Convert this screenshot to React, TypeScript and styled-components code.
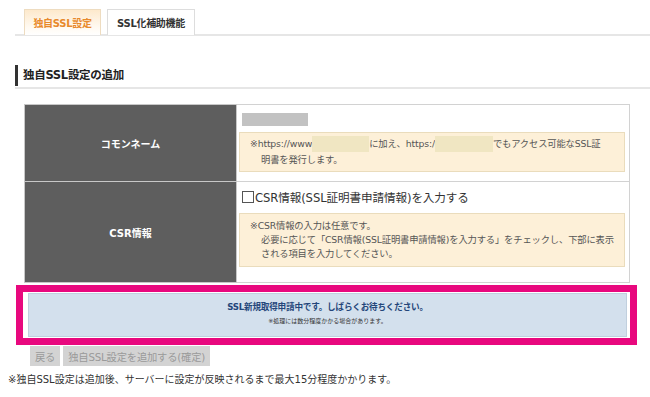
import React from 'react';
import styled, { createGlobalStyle } from 'styled-components';

const GlobalStyle = createGlobalStyle`
  html, body {
    margin: 0;
    padding: 0;
    background: #fff;
  }
  body {
    font-family: 'DejaVu Sans', 'Noto Sans CJK JP', sans-serif;
    color: #333;
  }
`;

const Page = styled.div`
  width: 650px;
  height: 397px;
  overflow: hidden;
  padding-left: 8px;
  box-sizing: border-box;
`;

const TabBar = styled.div`
  margin: 9px 0 0 7px;
  padding-left: 9px;
  height: 25px;
  display: flex;
  gap: 6px;
  border-bottom: 2px solid #e6e6e6;
`;

const Tab = styled.div<{ active?: boolean }>`
  width: ${(p) => (p.active ? '77px' : '88px')};
  box-sizing: border-box;
  height: 26px;
  display: flex;
  align-items: center;
  justify-content: center;
  font-size: 10px;
  font-weight: bold;
  letter-spacing: -0.3px;
  color: ${(p) => (p.active ? '#e8892b' : '#333')};
  border: 1px solid ${(p) => (p.active ? '#eedcc0' : '#dddddd')};
  border-bottom: none;
  background: ${(p) =>
    p.active ? 'linear-gradient(#fde9cc, #fffaf2 70%, #fff)' : '#fff'};
`;

const Heading = styled.div`
  margin: 29px 0 0 7px;
  padding-bottom: 1px;
  border-bottom: 2px solid #e6e6e6;
`;

const HeadingText = styled.h2`
  margin: 0;
  height: 21px;
  line-height: 21px;
  padding-left: 5px;
  border-left: 3px solid #333;
  font-size: 11.5px;
  font-weight: bold;
  letter-spacing: -0.3px;
  color: #222;
`;

const Table = styled.table`
  margin: 15px 0 0 16px;
  width: 606px;
  border-collapse: collapse;
  table-layout: fixed;
`;

const LabelCell = styled.th<{ h: number }>`
  width: 211px;
  height: ${(p) => p.h}px;
  padding: 0;
  background: #5e5e5e;
  color: #fff;
  font-size: 10px;
  font-weight: bold;
  text-align: center;
  border: 1px solid #c8c8c8;
`;

const ValueCell = styled.td`
  vertical-align: top;
  padding: 8px 4px 0 2px;
  border: 1px solid #d2d2d2;
`;

const Placeholder = styled.div`
  margin-left: 3px;
  width: 66px;
  height: 13px;
  background: #c2c2c2;
`;

const Note = styled.div<{ lh: number; pad: number; mt: number }>`
  margin-top: ${(p) => p.mt}px;
  padding: ${(p) => p.pad}px 8px ${(p) => p.pad}px 21px;
  text-indent: -11px;
  background: #fdf0d8;
  border: 1px solid #eadcbc;
  font-size: 9.3px;
  line-height: ${(p) => p.lh}px;
  color: #555;
  letter-spacing: -0.15px;
`;

const Blank = styled.span<{ w: number }>`
  display: inline-block;
  width: ${(p) => p.w}px;
  height: 16px;
  vertical-align: top;
  background: #f0e6c2;
`;

const CheckRow = styled.label`
  display: flex;
  align-items: center;
  margin-left: 3px;
  margin-top: -1px;
  height: 16px;
  font-size: 11.6px;
  color: #333;
  letter-spacing: -0.1px;
`;

const Box = styled.span`
  width: 10px;
  height: 10px;
  border: 1px solid #555;
  background: #fff;
  margin-right: 1px;
`;

const Frame = styled.div`
  margin: 2px 0 0 8px;
  width: 621px;
  box-sizing: border-box;
  border: 7px solid #e8087e;
  padding: 1px 3px 1px 5px;
`;

const Message = styled.div`
  background: #d3e0ed;
  border: 1px solid #c0cfde;
  padding: 7px 0 10px;
  text-align: center;
`;

const MessageTitle = styled.div`
  font-size: 8.6px;
  line-height: 12px;
  font-weight: bold;
  color: #24467a;
  letter-spacing: -0.2px;
`;

const MessageSub = styled.div`
  margin-top: 3px;
  font-size: 6px;
  line-height: 10px;
  color: #333;
`;

const Buttons = styled.div`
  display: flex;
  gap: 3px;
  margin: 1px 0 0 22px;
`;

const Button = styled.button`
  height: 20px;
  padding: 0 5px;
  border: none;
  background: #d3d3d3;
  color: #9a9a9a;
  font-family: inherit;
  font-size: 10.3px;
  letter-spacing: -0.2px;
`;

const Footnote = styled.p`
  margin: 6px 0 0;
  font-size: 10px;
  line-height: 16px;
  color: #333;
`;

const App: React.FC = () => {
  return (
    <Page>
      <GlobalStyle />
      <TabBar>
        <Tab active>独自SSL設定</Tab>
        <Tab>SSL化補助機能</Tab>
      </TabBar>
      <Heading>
        <HeadingText>独自SSL設定の追加</HeadingText>
      </Heading>
      <Table>
        <tbody>
          <tr>
            <LabelCell h={76}>コモンネーム</LabelCell>
            <ValueCell>
              <Placeholder />
              <Note lh={16} pad={3} mt={6}>
                ※https://www<Blank w={57} />に加え、https:/<Blank w={58} />でもアクセス可能なSSL証
                <br />
                明書を発行します。
              </Note>
            </ValueCell>
          </tr>
          <tr>
            <LabelCell h={100}>CSR情報</LabelCell>
            <ValueCell>
              <CheckRow>
                <Box />
                CSR情報(SSL証明書申請情報)を入力する
              </CheckRow>
              <Note lh={14} pad={5} mt={8}>
                ※CSR情報の入力は任意です。
                <br />
                必要に応じて「CSR情報(SSL証明書申請情報)を入力する」をチェックし、下部に表示
                <br />
                される項目を入力してください。
              </Note>
            </ValueCell>
          </tr>
        </tbody>
      </Table>
      <Frame>
        <Message>
          <MessageTitle>SSL新規取得申請中です。しばらくお待ちください。</MessageTitle>
          <MessageSub>※処理には数分程度かかる場合があります。</MessageSub>
        </Message>
      </Frame>
      <Buttons>
        <Button>戻る</Button>
        <Button>独自SSL設定を追加する(確定)</Button>
      </Buttons>
      <Footnote>
        ※独自SSL設定は追加後、サーバーに設定が反映されるまで最大15分程度かかります。
      </Footnote>
    </Page>
  );
};

export default App;
